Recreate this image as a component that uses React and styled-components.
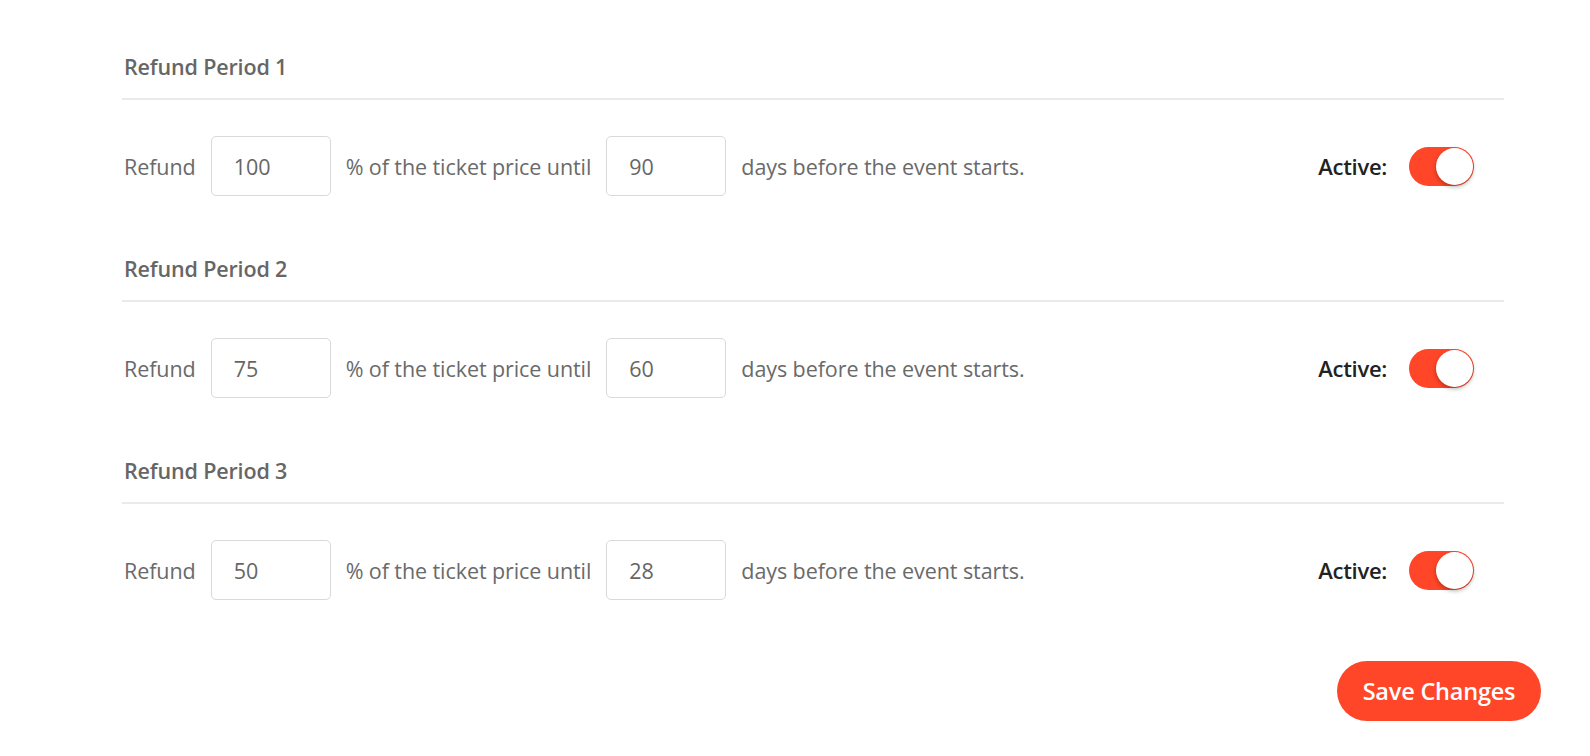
import React, { useState } from "react";
import styled, { createGlobalStyle } from "styled-components";

const GlobalStyle = createGlobalStyle`
  html, body {
    margin: 0;
    padding: 0;
    background: #ffffff;
  }
  body {
    font-family: "Open Sans", "Noto Sans", "Liberation Sans", sans-serif;
    -webkit-font-smoothing: antialiased;
  }
  * { box-sizing: border-box; }
`;

const Page = styled.div`
  padding: 52px 49px 30px 122px;
  display: flex;
  flex-direction: column;
`;

const Sections = styled.div`
  margin-right: 37px;
  display: flex;
  flex-direction: column;
  gap: 58px;
`;

const Section = styled.section`
  display: flex;
  flex-direction: column;
`;

const Title = styled.h3`
  margin: 0;
  padding: 1px 0 0 2px;
  height: 48px;
  font-size: 21.5px;
  line-height: 28px;
  font-weight: 600;
  color: #666666;
  letter-spacing: -0.15px;
  border-bottom: 2px solid #eaeaea;
`;

const Row = styled.div`
  margin-top: 36px;
  height: 60px;
  display: flex;
  align-items: center;
  padding: 0 30px 0 2px;
`;

const Text = styled.span`
  font-size: 21.5px;
  color: #6a6a6a;
  white-space: nowrap;
  letter-spacing: -0.08px;
  margin-right: 15px;
`;

const NumberInput = styled.input`
  width: 120px;
  height: 60px;
  border: 1px solid #d9d9d9;
  border-radius: 5px;
  padding: 0 0 0 22px;
  margin-right: 15px;
  font-family: inherit;
  font-size: 21.5px;
  color: #666666;
  background: #fff;
  outline: none;
`;

const Spacer = styled.div`
  flex: 1;
`;

const ActiveLabel = styled.span`
  font-size: 22px;
  font-weight: 600;
  color: #222222;
  margin-right: 22px;
  letter-spacing: -0.3px;
`;

const Switch = styled.button`
  position: relative;
  width: 65px;
  height: 39px;
  border: none;
  padding: 0;
  border-radius: 20px;
  background: ${(p) => (p.$on ? "#ff4628" : "#d6d6d6")};
  cursor: pointer;
`;

const Knob = styled.span`
  position: absolute;
  top: 1px;
  left: ${(p) => (p.$on ? "27px" : "1px")};
  width: 37px;
  height: 37px;
  border-radius: 50%;
  background: #ffffff;
  box-shadow: 0 2px 4px rgba(0, 0, 0, 0.3);
`;

const Footer = styled.div`
  margin-top: 61px;
  display: flex;
  justify-content: flex-end;
`;

const SaveButton = styled.button`
  width: 204px;
  height: 60px;
  border: none;
  border-radius: 30px;
  background: #ff4628;
  color: #ffffff;
  font-family: inherit;
  font-size: 23.5px;
  font-weight: 600;
  letter-spacing: -0.2px;
  cursor: pointer;
`;

const periods = [
  { id: 1, percent: "100", days: "90" },
  { id: 2, percent: "75", days: "60" },
  { id: 3, percent: "50", days: "28" },
];

function Toggle() {
  const [on, setOn] = useState(true);
  return (
    <Switch role="switch" aria-checked={on} $on={on} onClick={() => setOn(!on)}>
      <Knob $on={on} />
    </Switch>
  );
}

export default function App() {
  return (
    <>
      <GlobalStyle />
      <Page>
        <Sections>
          {periods.map((p) => (
            <Section key={p.id}>
              <Title>Refund Period {p.id}</Title>
              <Row>
                <Text>Refund</Text>
                <NumberInput defaultValue={p.percent} />
                <Text>% of the ticket price until</Text>
                <NumberInput defaultValue={p.days} />
                <Text>days before the event starts.</Text>
                <Spacer />
                <ActiveLabel>Active:</ActiveLabel>
                <Toggle />
              </Row>
            </Section>
          ))}
        </Sections>
        <Footer>
          <SaveButton>Save Changes</SaveButton>
        </Footer>
      </Page>
    </>
  );
}
